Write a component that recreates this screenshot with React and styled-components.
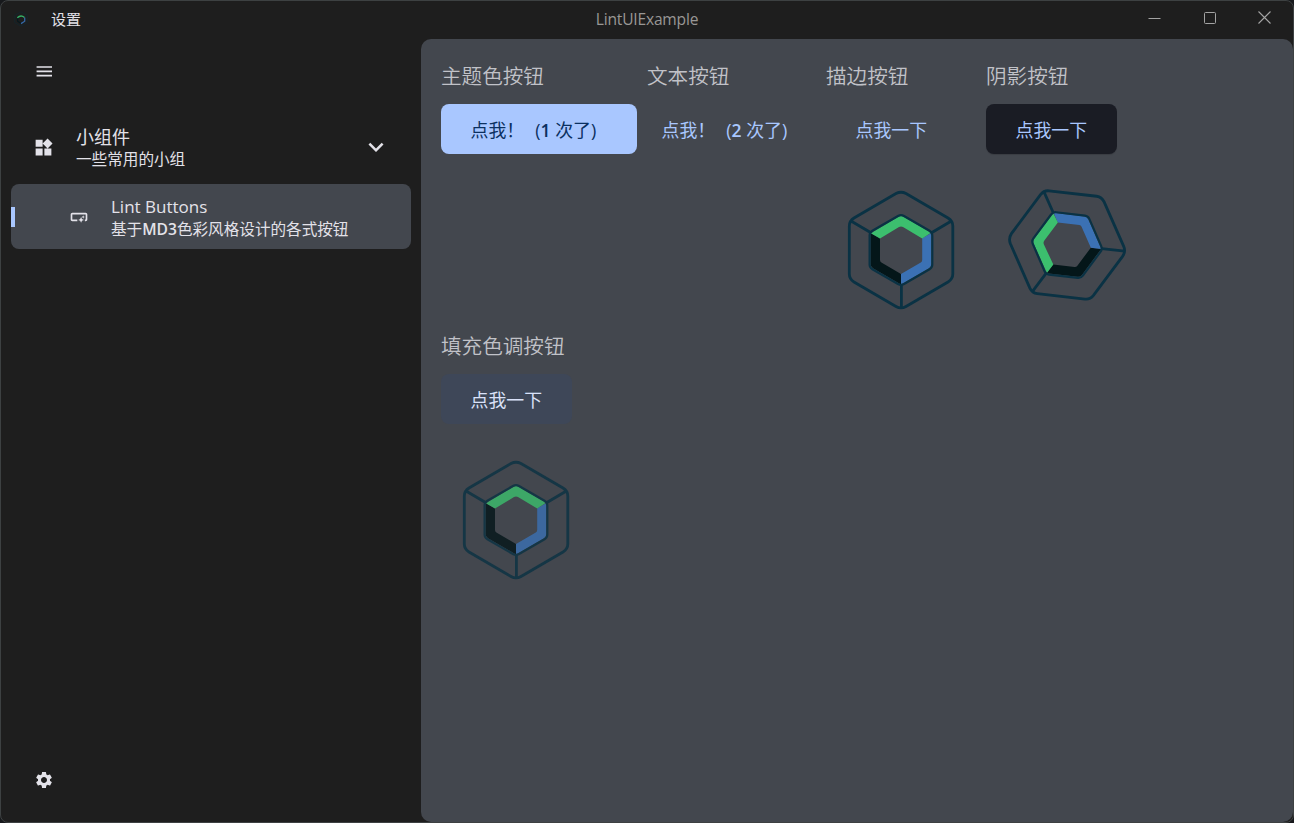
import React from 'react';
import styled, { createGlobalStyle } from 'styled-components';
import {
  MdMenu,
  MdWidgets,
  MdExpandMore,
  MdSettings,
  MdOutlineSmartButton,
} from 'react-icons/md';

const Global = createGlobalStyle`
  * { box-sizing: border-box; }
  html, body, #root { height: 100%; }
  body {
    margin: 0;
    overflow: hidden;
    background: #17191c;
    font-family: "Open Sans", "Noto Sans CJK SC", sans-serif;
    color: #e3e2e9;
  }
`;

const Window = styled.div`
  display: flex;
  flex-direction: column;
  width: 1294px;
  height: 823px;
  overflow: hidden;
  background: #1e1e1e;
  border: 1px solid #3d4142;
  border-radius: 8px;
`;

const TitleBar = styled.header`
  display: grid;
  grid-template-columns: 1fr auto 1fr;
  align-items: center;
  height: 38px;
  padding-bottom: 2px;
  flex: none;
`;

const TitleLeft = styled.div`
  display: flex;
  align-items: center;
  gap: 22px;
  padding-left: 12px;
`;

const MenuLabel = styled.span`
  font-size: 15px;
  line-height: 36px;
`;

const Title = styled.h1`
  margin: 0;
  font-size: 15.6px;
  font-weight: 400;
  line-height: 36px;
  letter-spacing: -0.2px;
  color: #999795;
`;

const WindowControls = styled.div`
  display: flex;
  justify-content: flex-end;
  align-items: center;
`;

const ControlButton = styled.button`
  display: flex;
  align-items: center;
  justify-content: center;
  width: 55px;
  height: 36px;
  padding: 0 2px 3px 0;
  border: 0;
  background: none;
  color: #a3a3a3;
`;

const Body = styled.div`
  display: flex;
  flex: 1;
  min-height: 0;
`;

const Sidebar = styled.nav`
  display: flex;
  flex-direction: column;
  width: 420px;
  flex: none;
  padding: 0 10px;
`;

const IconButton = styled.button`
  display: flex;
  align-items: center;
  justify-content: center;
  width: 66px;
  height: ${(p) => p.$height}px;
  padding: 0;
  border: 0;
  background: none;
  color: #e3e2e9;
  font-size: ${(p) => p.$size}px;
`;

const NavGroup = styled.div`
  display: flex;
  align-items: center;
  height: 66px;
  margin-top: 10px;
  padding-right: 20px;
`;

const NavIcon = styled.span`
  display: flex;
  justify-content: center;
  width: ${(p) => p.$width}px;
  padding-left: ${(p) => p.$indent || 0}px;
  font-size: ${(p) => p.$size}px;
`;

const NavText = styled.div`
  display: flex;
  flex-direction: column;
  flex: 1;
`;

const NavTitle = styled.span`
  font-size: ${(p) => p.$size}px;
  line-height: 24px;
  white-space: nowrap;
`;

const NavCaption = styled.span`
  font-size: 15.6px;
  line-height: 20px;
  white-space: nowrap;
  b { font-weight: 600; }
`;

const NavItem = styled.div`
  display: flex;
  align-items: center;
  height: 65px;
  margin-top: 4px;
  border-radius: 8px;
  background: #43474e;
`;

const Indicator = styled.span`
  width: 4px;
  height: 20px;
  background: #a9c7ff;
`;

const SidebarFooter = styled.div`
  margin-top: auto;
  padding-bottom: 9px;
`;

const Content = styled.main`
  display: flex;
  flex-wrap: wrap;
  align-content: flex-start;
  gap: 0 10px;
  flex: 1;
  min-width: 0;
  padding: 20px;
  border-radius: 10px;
  background: #43474e;
`;

const Demo = styled.section`
  display: flex;
  flex-direction: column;
  align-items: flex-start;
  width: ${(p) => p.$width}px;
  height: 270px;
`;

const DemoTitle = styled.h2`
  margin: 0 0 10px;
  font-size: 20.6px;
  font-weight: 350;
  line-height: 35px;
  white-space: nowrap;
  color: #c1c2c8;
`;

const tones = {
  filled: 'background: #a9c7ff; color: #0b305f;',
  text: 'background: none; color: #a9c7ff; padding: 2px 14.5px 0;',
  outlined: 'background: none; color: #a9c7ff;',
  elevated: 'background: #1a1c24; color: #a9c7ff; box-shadow: 0 1px 1px rgba(0, 0, 0, 0.15);',
  tonal: 'background: #3e4758; color: #dae2f9;',
};

const Button = styled.button`
  height: 50px;
  padding: 2px 30px 0 29.5px;
  border: 0;
  border-radius: 8px;
  font-family: inherit;
  font-size: 17.9px;
  font-weight: 400;
  line-height: 48px;
  white-space: pre;
  ${(p) => tones[p.$tone]}
`;

const Count = styled.span`
  margin: 0 11px;
  b { font-size: 17.5px; font-weight: 600; }
`;

const LogoSlot = styled.div`
  display: flex;
  justify-content: center;
  width: 150px;
  padding-top: 36px;
`;

const LogoSvg = styled.svg`
  flex: none;
  overflow: visible;
  opacity: ${(p) => p.$opacity || 1};
`;

function ComposeLogo({ size = 120, opacity, transform }) {
  return (
    <LogoSvg width={size} height={size} viewBox="0 0 120 120" $opacity={opacity}>
      <g transform={transform}>
        <path fill="#041619" d="M29.6 43 L39 48.5 V70 Q39 71.6 40.4 72.5 L60 84 V94.4 L32 78.2 Q29.6 76.6 29.6 74Z" />
        <path fill="#3b71b4" d="M90.4 43 L81.2 48.3 V70 Q81.2 71.6 79.8 72.4 L60 84 V94.4 L88 78.2 Q90.4 76.6 90.4 74Z" />
        <path fill="#3cbf6e" d="M29.8 43.2 L57.5 26.8 Q60 25.4 62.5 26.8 L90 42.8 L81.2 48.4 L62 37 Q60 35.8 58 37 L39 48.6Z" />
        <g fill="none" stroke="#0a3244" strokeWidth="2.8">
          <path d="M55 3.5 Q60 1 65 3.5 L107 28 Q111.8 31 111.8 36 V84 Q111.8 89 107 92 L65 116.5 Q60 119.4 55 116.5 L13 92 Q8.3 89 8.3 84 V36 Q8.3 31 13 28Z" />
          <path strokeWidth="2.2" d="M57 26 Q60 24.2 63 26 L88.5 40.7 Q91.3 42.5 91.3 45.5 V74.5 Q91.3 77.5 88.5 79.2 L63 94 Q60 95.8 57 94 L31.4 79.2 Q28.6 77.5 28.6 74.5 V45.5 Q28.6 42.5 31.4 40.7Z" />
          <path d="M10 31 L30 42.7 M110.4 31 L90.5 42.7 M60.4 95 V118" />
        </g>
      </g>
    </LogoSvg>
  );
}

function AppMark() {
  return (
    <svg width="16" height="16" viewBox="0 0 16 16" fill="none" strokeWidth="1.3">
      <path d="M8 .8 L14.3 4.4 V11.6 L8 15.2 L1.7 11.6 V4.4Z" stroke="#15252b" strokeWidth="1" />
      <path d="M4.6 6 V10.2 L8 12.4" stroke="#07181d" />
      <path d="M4.3 6.8 Q8 3.4 11.5 6.6" stroke="#36b067" />
      <path d="M11.7 6.4 V10.2 L8 12.6" stroke="#3567a5" />
    </svg>
  );
}

export default function App() {
  return (
    <>
      <Global />
      <Window>
        <TitleBar>
          <TitleLeft>
            <AppMark />
            <MenuLabel>设置</MenuLabel>
          </TitleLeft>
          <Title>LintUIExample</Title>
          <WindowControls>
            <ControlButton aria-label="minimize">
              <svg width="13" height="13" fill="none" stroke="currentColor"><path d="M.5 7.5H12.5" /></svg>
            </ControlButton>
            <ControlButton aria-label="maximize">
              <svg width="13" height="13" fill="none" stroke="currentColor"><rect x="1.5" y="1.5" width="11" height="11" rx="1" /></svg>
            </ControlButton>
            <ControlButton aria-label="close">
              <svg width="13" height="13" fill="none" stroke="currentColor" strokeWidth="1.1"><path d="M.5 .5L12.5 12.5M12.5 .5L.5 12.5" /></svg>
            </ControlButton>
          </WindowControls>
        </TitleBar>
        <Body>
          <Sidebar>
            <IconButton $height={65} $size={20.6} aria-label="menu"><MdMenu /></IconButton>
            <NavGroup>
              <NavIcon $width={65} $size={21}><MdWidgets /></NavIcon>
              <NavText>
                <NavTitle $size={18}>小组件</NavTitle>
                <NavCaption>一些常用的小组</NavCaption>
              </NavText>
              <NavIcon $width={30} $size={30}><MdExpandMore /></NavIcon>
            </NavGroup>
            <NavItem>
              <Indicator />
              <NavIcon $width={96} $indent={32} $size={20}><MdOutlineSmartButton /></NavIcon>
              <NavText>
                <NavTitle $size={17}>Lint Buttons</NavTitle>
                <NavCaption>基于<b>MD3</b>色彩风格设计的各式按钮</NavCaption>
              </NavText>
            </NavItem>
            <SidebarFooter>
              <IconButton $height={66} $size={20} aria-label="settings"><MdSettings /></IconButton>
            </SidebarFooter>
          </Sidebar>
          <Content>
            <Demo $width={196}>
              <DemoTitle>主题色按钮</DemoTitle>
              <Button $tone="filled">点我！<Count>(<b>1</b> 次了)</Count></Button>
            </Demo>
            <Demo $width={169}>
              <DemoTitle>文本按钮</DemoTitle>
              <Button $tone="text">点我！<Count>(<b>2</b> 次了)</Count></Button>
            </Demo>
            <Demo $width={150}>
              <DemoTitle>描边按钮</DemoTitle>
              <Button $tone="outlined">点我一下</Button>
              <LogoSlot><ComposeLogo /></LogoSlot>
            </Demo>
            <Demo $width={150}>
              <DemoTitle>阴影按钮</DemoTitle>
              <Button $tone="elevated">点我一下</Button>
              <LogoSlot><ComposeLogo transform="translate(6 -5) rotate(-83.5 60 60)" /></LogoSlot>
            </Demo>
            <Demo $width={150}>
              <DemoTitle>填充色调按钮</DemoTitle>
              <Button $tone="tonal">点我一下</Button>
              <LogoSlot><ComposeLogo opacity={0.8} /></LogoSlot>
            </Demo>
          </Content>
        </Body>
      </Window>
    </>
  );
}
